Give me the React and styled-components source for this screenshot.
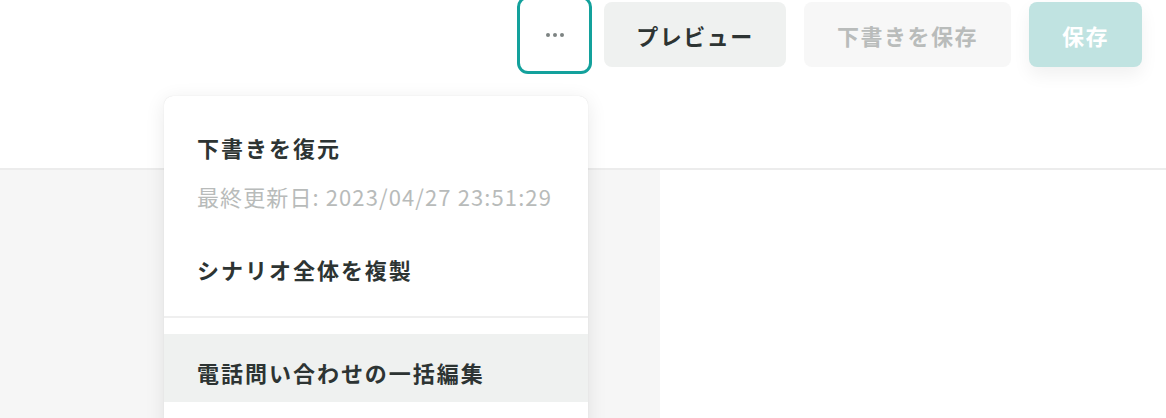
import React from 'react'
import styled, { createGlobalStyle } from 'styled-components'

const GlobalStyle = createGlobalStyle`
  html, body {
    margin: 0;
    padding: 0;
    background: #fff;
  }
  body {
    font-family: "Noto Sans CJK JP", "Noto Sans", sans-serif;
    color: #2d3433;
    overflow: hidden;
  }
`

const menuItems = [
  { label: 'シナリオ全体を複製' },
]

function App() {
  return (
    <Page>
      <GlobalStyle />
      <Header>
        <Toolbar>
          <MoreBtn aria-label="more">
            <Dot />
            <Dot />
            <Dot />
          </MoreBtn>
          <ToolBtn $kind="secondary" $width={182}>プレビュー</ToolBtn>
          <ToolBtn $kind="disabled" $width={207}>下書きを保存</ToolBtn>
          <ToolBtn $kind="primary" $width={113}>保存</ToolBtn>
        </Toolbar>
      </Header>
      <Body>
        <LeftPane />
        <RightPane />
      </Body>

      <Menu>
        <RestoreItem>
          <ItemLabel>下書きを復元</ItemLabel>
          <ItemMeta>最終更新日: 2023/04/27 23:51:29</ItemMeta>
        </RestoreItem>
        {menuItems.map((item) => (
          <MenuItem key={item.label}>
            <ItemLabel>{item.label}</ItemLabel>
          </MenuItem>
        ))}
        <Divider />
        <MenuItem $active>
          <ItemLabel>電話問い合わせの一括編集</ItemLabel>
        </MenuItem>
      </Menu>
    </Page>
  )
}

export default App

const Page = styled.div`
  position: relative;
  width: 1166px;
  height: 418px;
  overflow: hidden;
  display: flex;
  flex-direction: column;
`

const Header = styled.header`
  height: 168px;
  flex: none;
  border-bottom: 2px solid #ececec;
  background: #fff;
`

const Toolbar = styled.div`
  display: flex;
  justify-content: flex-end;
  align-items: flex-start;
  padding: 2px 24px 0 0;
`

const MoreBtn = styled.button`
  width: 75px;
  height: 78px;
  margin: -6px 12px 0 0;
  box-sizing: border-box;
  border: 3px solid #13a19c;
  border-radius: 11px;
  background: #fff;
  display: flex;
  align-items: center;
  justify-content: center;
  gap: 3px;
  padding: 0;
`

const Dot = styled.span`
  width: 4px;
  height: 4px;
  border-radius: 50%;
  background: #7d8382;
`

const kinds = {
  secondary: { bg: '#eff1f0', fg: '#2d3433', shadow: 'none' },
  disabled: { bg: '#f7f7f7', fg: '#b9bcbb', shadow: 'none' },
  primary: { bg: '#c0e3e1', fg: '#ffffff', shadow: '0 8px 18px rgba(0, 0, 0, 0.06)' },
}

const ToolBtn = styled.button`
  width: ${(p) => p.$width}px;
  height: 65px;
  margin-right: 18px;
  box-sizing: border-box;
  border: none;
  border-radius: 8px;
  background: ${(p) => kinds[p.$kind].bg};
  color: ${(p) => kinds[p.$kind].fg};
  box-shadow: ${(p) => kinds[p.$kind].shadow};
  font-family: inherit;
  font-size: 22px;
  font-weight: 700;
  letter-spacing: 0.07em;
  padding: 0;
  &:last-child {
    margin-right: 0;
  }
`

const Body = styled.main`
  flex: 1;
  display: grid;
  grid-template-columns: 660px 1fr;
`

const LeftPane = styled.section`
  background: #f6f6f6;
`

const RightPane = styled.section`
  background: #fff;
`

const Menu = styled.div`
  position: absolute;
  left: 164px;
  top: 96px;
  width: 424px;
  height: 340px;
  background: #fff;
  border-radius: 9px;
  box-shadow: 0 4px 20px rgba(0, 0, 0, 0.09), 0 0 1px rgba(0, 0, 0, 0.14);
  padding-top: 36px;
  box-sizing: border-box;
`

const RestoreItem = styled.div`
  padding: 0 33px;
`

const MenuItem = styled.div`
  padding: ${(p) => (p.$active ? '23px 33px 15px' : '43px 33px 32px')};
  background: ${(p) => (p.$active ? '#eff1f0' : 'transparent')};
`

const ItemLabel = styled.div`
  font-size: 22px;
  line-height: 30px;
  font-weight: 700;
  letter-spacing: 0.09em;
  color: #2d3433;
`

const ItemMeta = styled.div`
  margin-top: 19px;
  font-size: 22px;
  line-height: 30px;
  font-weight: 400;
  letter-spacing: 0.05em;
  color: #b8bbba;
`

const Divider = styled.hr`
  margin: 0 0 16px;
  border: none;
  height: 2px;
  background: #efefef;
`
